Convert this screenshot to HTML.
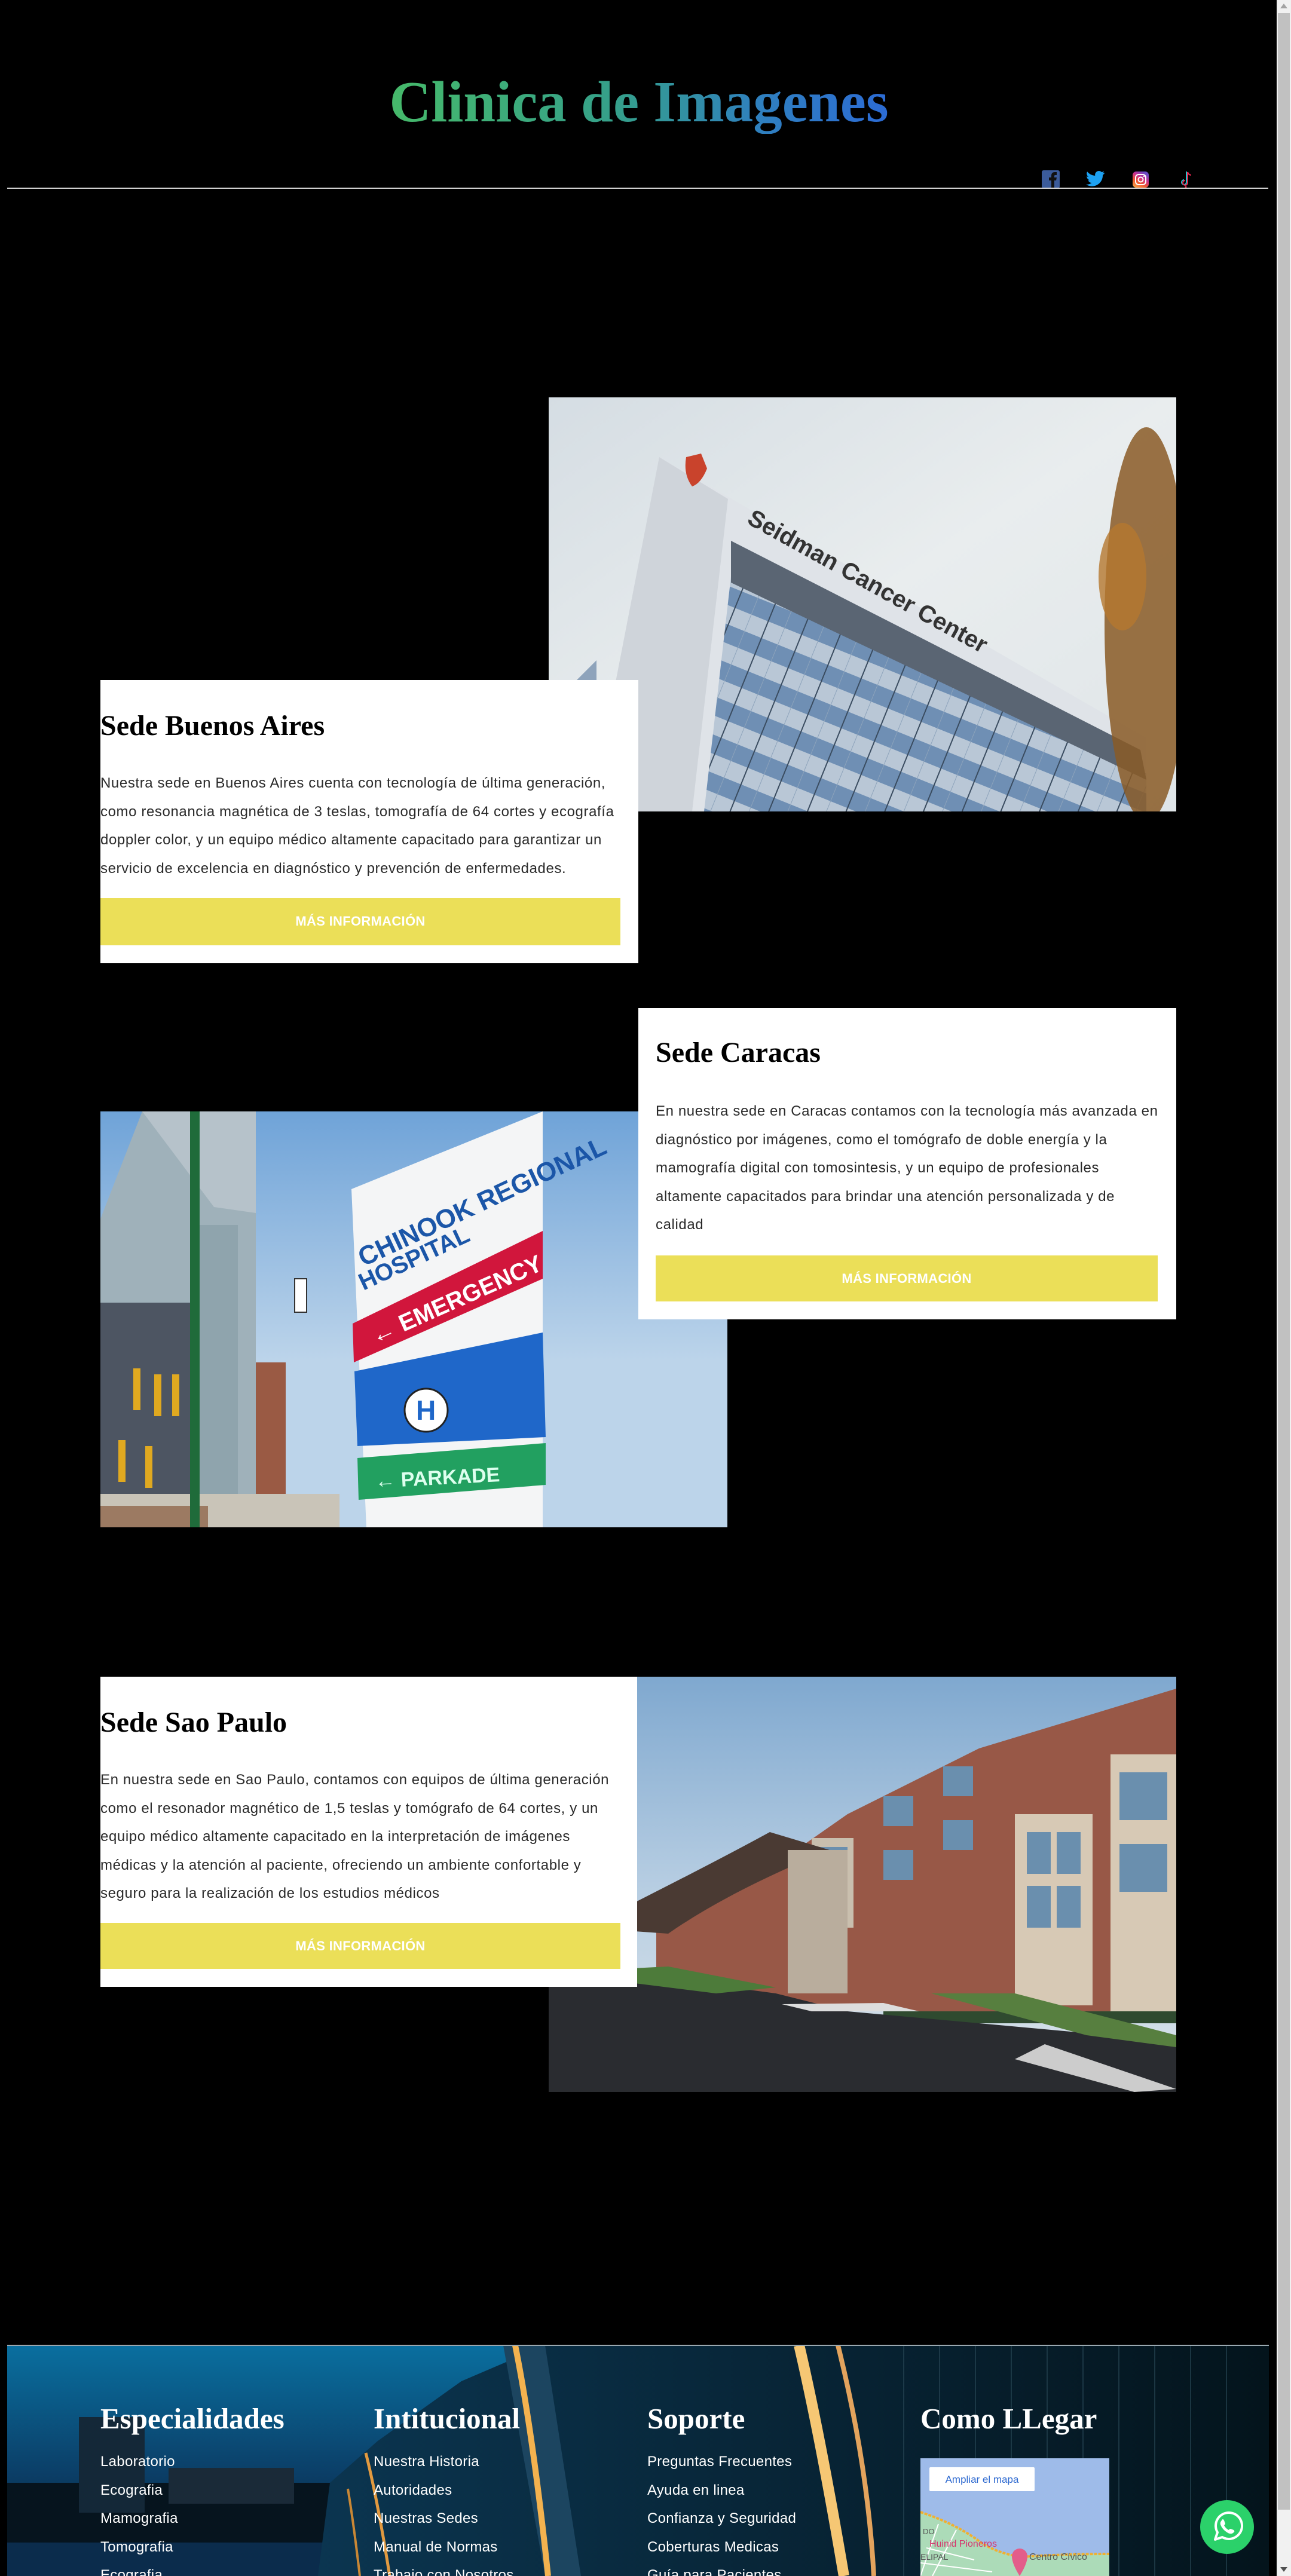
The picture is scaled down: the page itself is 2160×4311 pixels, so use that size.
<!DOCTYPE html>
<html><head><meta charset="utf-8">
<style>
*{margin:0;padding:0;box-sizing:border-box}
html,body{width:2160px;height:4311px;overflow:hidden;background:#000}
body{position:relative;font-family:"Liberation Sans",sans-serif}
.abs{position:absolute}
.title{left:0;width:2138px;top:106px;text-align:center;font-family:"Liberation Serif",serif;font-size:97px;line-height:130px;font-weight:bold}
.title span{background:linear-gradient(90deg,#46b96a 0%,#35a08a 45%,#2f7fc0 75%,#2c6bd4 100%);-webkit-background-clip:text;background-clip:text;color:transparent}
.hline{left:12px;width:2110px;top:314px;height:2px;background:#cfcfcf}
.card{background:#fff}
h2{position:absolute;font-family:"Liberation Serif",serif;font-weight:bold;font-size:48px;line-height:60px;color:#000;white-space:nowrap}
p.t{position:absolute;font-size:24px;line-height:47.5px;color:#2a2a2a;white-space:nowrap;letter-spacing:0.6px}
.btn{position:absolute;background:#ebdf58;color:#fff;font-weight:bold;font-size:22px;text-align:center;line-height:78px;letter-spacing:0.3px}
.fh{position:absolute;top:4018px;font-family:"Liberation Serif",serif;font-weight:bold;font-size:49px;line-height:60px;color:#fff;white-space:nowrap}
.fl{position:absolute;color:#fff;font-size:24px;line-height:47.5px;top:4096px;white-space:nowrap;letter-spacing:0.3px}
</style></head><body>

<div class="abs title"><span>Clinica de Imagenes</span></div>

<svg class="abs" style="left:1743px;top:285px" width="30" height="30" viewBox="0 0 30 30"><rect width="30" height="30" rx="3" fill="#3b5b9a"/><path d="M16 30V17h-4v-5h4V9c0-4 2-6 6-6h3v5h-2c-2 0-2 1-2 2v2h4l-1 5h-3v13z" fill="#111"/></svg>
<svg class="abs" style="left:1817px;top:286px" width="32" height="27" viewBox="0 0 32 27"><path d="M31 3c-1 .6-2.4 1-3.6 1.1 1.3-.8 2.300-2 2.800-3.500-1.200.7-2.600 1.200-4 1.500A6.400 6.400 0 0 0 15.300 8C10 7.800 5.300 5.200 2.100 1.300.4 4.200 1.300 8 4.100 9.800c-1 0-2-.3-2.900-.8 0 3.100 2.200 5.800 5.200 6.400-1 .3-2 .3-2.900.1.8 2.600 3.200 4.400 6 4.500A13 13 0 0 1 0 22.600 18 18 0 0 0 28 7c1.200-.9 2.300-2 3-3.100z" fill="#1da1f2"/></svg>
<svg class="abs" style="left:1895px;top:287px" width="27" height="27" viewBox="0 0 27 27"><defs><linearGradient id="ig" x1="0" y1="1" x2="0.6" y2="0"><stop offset="0" stop-color="#fdb24c"/><stop offset=".4" stop-color="#f0582f"/><stop offset=".7" stop-color="#c92e8f"/><stop offset="1" stop-color="#6a4bc4"/></linearGradient></defs><rect width="27" height="27" rx="6" fill="url(#ig)"/><rect x="5" y="5" width="17" height="17" rx="5" fill="none" stroke="#fff" stroke-width="2"/><circle cx="13.5" cy="13.5" r="4" fill="none" stroke="#fff" stroke-width="2"/><circle cx="19" cy="8" r="1.2" fill="#fff"/></svg>
<svg class="abs" style="left:1972px;top:285px" width="24" height="30" viewBox="0 0 24 30"><path d="M13 2v18a4 4 0 1 1-4-4" fill="none" stroke="#25c2d0" stroke-width="2"/><path d="M15 3v18a4 4 0 1 1-4-4M15 3c1 3 3 5 6 5" fill="none" stroke="#e8284f" stroke-width="2"/><circle cx="12" cy="28" r="1.5" fill="#e8284f"/></svg>

<div class="abs hline"></div>

<!-- Section 1 image -->
<svg class="abs" style="left:918px;top:665px" width="1050" height="693" viewBox="0 0 1050 693" preserveAspectRatio="none">
<defs><linearGradient id="sky1" x1="0" y1="0" x2="1" y2="1"><stop offset="0" stop-color="#d5dde3"/><stop offset=".5" stop-color="#e9edee"/><stop offset="1" stop-color="#dfe5e8"/></linearGradient>
<pattern id="wp" width="60" height="60" patternUnits="userSpaceOnUse" patternTransform="rotate(22)"><rect width="60" height="60" fill="#6f8fb4"/><rect x="0" y="30" width="60" height="30" fill="#b9c7d6"/><rect x="0" y="0" width="2" height="60" fill="#3a4c60"/><rect x="30" y="0" width="1" height="60" fill="#8da3bb"/></pattern></defs>
<rect width="1050" height="693" fill="url(#sky1)"/>
<polygon points="0,693 0,520 80,440 80,693" fill="#8ea3bb"/>
<polygon points="185,100 1000,570 1000,693 70,693" fill="#dfe3e8"/>
<polygon points="185,100 300,170 240,693 70,693" fill="#cfd4da"/>
<polygon points="305,300 1000,630 1000,693 260,693" fill="url(#wp)"/>
<polygon points="305,240 990,590 1000,640 305,310" fill="#5a6573"/>
<text x="330" y="210" font-family="Liberation Sans" font-weight="bold" font-size="40" fill="#333" transform="rotate(29 330 210)">Seidman Cancer Center</text>
<path d="M230 100 l25 -6 l10 25 q-10 25 -25 30 q-15 -20 -10 -49z" fill="#c9432c"/>
<ellipse cx="1000" cy="380" rx="70" ry="330" fill="#8a5a26" opacity=".85"/>
<ellipse cx="960" cy="300" rx="40" ry="90" fill="#b5782f" opacity=".8"/>
</svg>

<div class="abs card" style="left:168px;top:1138px;width:900px;height:474px"></div>
<h2 style="left:168px;top:1185px">Sede Buenos Aires</h2>
<p class="t" style="left:168px;top:1287px">Nuestra sede en Buenos Aires cuenta con tecnología de última generación,<br>como resonancia magnética de 3 teslas, tomografía de 64 cortes y ecografía<br>doppler color, y un equipo médico altamente capacitado para garantizar un<br>servicio de excelencia en diagnóstico y prevención de enfermedades.</p>
<div class="btn" style="left:168px;top:1503px;width:870px;height:79px">MÁS INFORMACIÓN</div>

<!-- Section 2 image -->
<svg class="abs" style="left:168px;top:1860px" width="1049" height="696" viewBox="0 0 1049 696" preserveAspectRatio="none">
<defs><linearGradient id="sky2" x1="0" y1="0" x2="0" y2="1"><stop offset="0" stop-color="#6fa3d8"/><stop offset=".6" stop-color="#bcd4ea"/></linearGradient></defs>
<rect width="1049" height="696" fill="url(#sky2)"/>
<polygon points="0,180 70,0 260,0 260,696 0,696" fill="#9fb1ba"/>
<polygon points="70,0 260,0 260,170 190,160" fill="#b6c2ca"/>
<rect x="0" y="320" width="200" height="330" fill="#4d5562"/>
<rect x="150" y="190" width="80" height="470" fill="#8fa4ad"/>
<rect x="55" y="430" width="12" height="70" fill="#e0a920"/><rect x="90" y="440" width="12" height="70" fill="#e0a920"/><rect x="120" y="440" width="12" height="70" fill="#e0a920"/>
<rect x="30" y="550" width="12" height="70" fill="#e0a920"/><rect x="75" y="560" width="12" height="70" fill="#e0a920"/>
<rect x="260" y="420" width="50" height="240" fill="#9a5a44"/>
<rect x="0" y="640" width="400" height="56" fill="#c9c4b8"/>
<rect x="0" y="660" width="180" height="36" fill="#9c7a62"/>
<rect x="150" y="0" width="16" height="696" fill="#1f6b3a"/>
<rect x="325" y="280" width="20" height="56" fill="#fff" stroke="#333" stroke-width="2"/>
<polygon points="420,130 740,0 740,696 445,696" fill="#f4f5f6"/>
<text x="440" y="260" font-family="Liberation Sans" font-weight="bold" font-size="44" fill="#1b56a8" transform="rotate(-25 440 260)">CHINOOK REGIONAL</text>
<text x="440" y="300" font-family="Liberation Sans" font-weight="bold" font-size="40" fill="#1b56a8" transform="rotate(-25 440 300)">HOSPITAL</text>
<polygon points="422,355 740,200 740,280 424,420" fill="#d1163c"/>
<text x="460" y="390" font-family="Liberation Sans" font-weight="bold" font-size="40" fill="#fff" transform="rotate(-24 460 390)">← EMERGENCY</text>
<polygon points="425,435 740,370 745,545 430,560" fill="#1f67c9"/>
<circle cx="545" cy="500" r="36" fill="#fff" stroke="#222" stroke-width="3"/>
<text x="528" y="516" font-family="Liberation Sans" font-weight="bold" font-size="46" fill="#1f67c9">H</text>
<polygon points="430,580 745,555 745,625 432,650" fill="#22a060"/>
<text x="460" y="630" font-family="Liberation Sans" font-weight="bold" font-size="34" fill="#dfe" transform="rotate(-3 460 630)">← PARKADE</text>
</svg>

<div class="abs card" style="left:1068px;top:1687px;width:900px;height:521px"></div>
<h2 style="left:1097px;top:1732px">Sede Caracas</h2>
<p class="t" style="left:1097px;top:1836px">En nuestra sede en Caracas contamos con la tecnología más avanzada en<br>diagnóstico por imágenes, como el tomógrafo de doble energía y la<br>mamografía digital con tomosintesis, y un equipo de profesionales<br>altamente capacitados para brindar una atención personalizada y de<br>calidad</p>
<div class="btn" style="left:1097px;top:2101px;width:840px;height:77px">MÁS INFORMACIÓN</div>

<!-- Section 3 image -->
<svg class="abs" style="left:918px;top:2806px" width="1050" height="695" viewBox="0 0 1050 695" preserveAspectRatio="none">
<defs><linearGradient id="sky3" x1="0" y1="0" x2="0" y2="1"><stop offset="0" stop-color="#7fa8cf"/><stop offset=".5" stop-color="#b6cde2"/><stop offset="1" stop-color="#dde5ea"/></linearGradient></defs>
<rect width="1050" height="695" fill="url(#sky3)"/>
<polygon points="180,420 300,360 400,300 500,230 720,120 1050,20 1050,560 180,560" fill="#985847"/>
<rect x="780" y="230" width="130" height="320" fill="#d7c9b5"/>
<rect x="800" y="260" width="40" height="70" fill="#6a8fae"/><rect x="850" y="260" width="40" height="70" fill="#6a8fae"/>
<rect x="800" y="350" width="40" height="70" fill="#6a8fae"/><rect x="850" y="350" width="40" height="70" fill="#6a8fae"/>
<rect x="940" y="130" width="110" height="440" fill="#d7c9b5"/>
<rect x="955" y="160" width="80" height="80" fill="#6a8fae"/><rect x="955" y="280" width="80" height="80" fill="#6a8fae"/>
<rect x="440" y="270" width="70" height="150" fill="#c9bfae"/>
<rect x="450" y="285" width="50" height="120" fill="#6a8fae"/>
<rect x="560" y="200" width="50" height="50" fill="#6a8fae"/><rect x="560" y="290" width="50" height="50" fill="#6a8fae"/>
<rect x="660" y="150" width="50" height="50" fill="#6a8fae"/><rect x="660" y="240" width="50" height="50" fill="#6a8fae"/>
<path d="M60 420 Q260 320 370 260 L470 290 Q300 360 200 430 Z" fill="#4a3a33"/>
<rect x="400" y="290" width="100" height="240" fill="#b9ad9d"/>
<rect x="560" y="560" width="490" height="20" fill="#2f4a2f"/>
<polygon points="0,495 230,510 380,530 500,560 1050,610 1050,695 0,695" fill="#2a2c30"/>
<polygon points="0,495 200,485 380,520 280,530" fill="#4d7b3a"/>
<polygon points="640,530 900,600 1050,620 1050,600 780,530" fill="#577f3f"/>
<polygon points="390,548 560,546 620,560 440,560" fill="#ddd"/>
<polygon points="780,640 830,615 1050,690 980,695" fill="#ccc"/>
</svg>

<div class="abs card" style="left:168px;top:2806px;width:898px;height:519px"></div>
<h2 style="left:168px;top:2853px">Sede Sao Paulo</h2>
<p class="t" style="left:168px;top:2955px">En nuestra sede en Sao Paulo, contamos con equipos de última generación<br>como el resonador magnético de 1,5 teslas y tomógrafo de 64 cortes, y un<br>equipo médico altamente capacitado en la interpretación de imágenes<br>médicas y la atención al paciente, ofreciendo un ambiente confortable y<br>seguro para la realización de los estudios médicos</p>
<div class="btn" style="left:168px;top:3218px;width:870px;height:77px">MÁS INFORMACIÓN</div>

<!-- Footer -->
<svg class="abs" style="left:12px;top:3925px" width="2111" height="386" viewBox="0 0 2111 386" preserveAspectRatio="none">
<defs><linearGradient id="fsky" x1="0" y1="0" x2="0" y2="1"><stop offset="0" stop-color="#0a6f9f"/><stop offset=".55" stop-color="#0b3f68"/><stop offset="1" stop-color="#061a2a"/></linearGradient>
<linearGradient id="fr" x1="0" y1="0" x2="1" y2="0"><stop offset="0" stop-color="#0b3550"/><stop offset="1" stop-color="#04141c"/></linearGradient></defs>
<rect width="2111" height="386" fill="url(#fsky)"/>
<rect x="0" y="230" width="560" height="156" fill="#06141e"/>
<rect x="120" y="120" width="110" height="160" fill="#142838"/>
<rect x="270" y="205" width="210" height="60" fill="#1a2a38"/>
<rect x="0" y="330" width="560" height="56" fill="#0b2c4c"/>
<polygon points="520,386 540,230 620,160 760,60 900,0 2111,0 2111,386" fill="url(#fr)"/>
<polygon points="830,0 900,0 960,386 900,386" fill="#1c4560"/>
<path d="M850 0 Q880 150 905 386" stroke="#f3b24f" stroke-width="10" fill="none"/>
<path d="M1325 0 Q1360 150 1400 386" stroke="#f6c774" stroke-width="18" fill="none"/>
<path d="M1390 0 Q1440 200 1450 386" stroke="#e3a35d" stroke-width="8" fill="none"/>
<path d="M600 180 Q620 260 640 386" stroke="#e29a40" stroke-width="5" fill="none"/>
<path d="M570 240 Q580 300 590 386" stroke="#c98735" stroke-width="4" fill="none"/>
<g stroke="#2a4a58" stroke-width="2" opacity=".6">
<line x1="1500" y1="0" x2="1500" y2="386"/><line x1="1560" y1="0" x2="1560" y2="386"/><line x1="1620" y1="0" x2="1620" y2="386"/><line x1="1680" y1="0" x2="1680" y2="386"/><line x1="1740" y1="0" x2="1740" y2="386"/><line x1="1800" y1="0" x2="1800" y2="386"/><line x1="1860" y1="0" x2="1860" y2="386"/><line x1="1920" y1="0" x2="1920" y2="386"/><line x1="1980" y1="0" x2="1980" y2="386"/><line x1="2040" y1="0" x2="2040" y2="386"/>
</g>
</svg>
<div class="abs" style="left:12px;top:3924px;width:2111px;height:2px;background:#9aa8b0"></div>

<div class="fh" style="left:168px">Especialidades</div>
<div class="fh" style="left:625px">Intitucional</div>
<div class="fh" style="left:1083px">Soporte</div>
<div class="fh" style="left:1540px">Como LLegar</div>
<div class="fl" style="left:168px">Laboratorio<br>Ecografia<br>Mamografia<br>Tomografia<br>Ecografia</div>
<div class="fl" style="left:625px">Nuestra Historia<br>Autoridades<br>Nuestras Sedes<br>Manual de Normas<br>Trabajo con Nosotros</div>
<div class="fl" style="left:1083px">Preguntas Frecuentes<br>Ayuda en linea<br>Confianza y Seguridad<br>Coberturas Medicas<br>Guía para Pacientes</div>

<svg class="abs" style="left:1540px;top:4114px" width="316" height="197" viewBox="0 0 316 197">
<rect width="316" height="197" fill="#9ebbe9"/>
<path d="M0 90 Q60 110 100 140 Q130 160 170 165 Q240 160 316 160 L316 197 L0 197 Z" fill="#acdbb8"/>
<path d="M0 90 Q60 110 100 140 Q130 160 170 165 Q240 160 316 160" stroke="#f0b030" stroke-width="4" fill="none" stroke-dasharray="5 2"/>
<g stroke="#fff" stroke-width="2" fill="none"><path d="M30 110 L0 197M60 120 L20 197M10 150 L90 170M0 175 L120 190"/></g>
<text x="4" y="127" font-family="Liberation Sans" font-size="13" fill="#555">DO</text>
<text x="15" y="148" font-family="Liberation Sans" font-size="16" fill="#d6336c">Huinid Pioneros</text>
<text x="0" y="170" font-family="Liberation Sans" font-size="14" fill="#555">ELIPAL</text>
<text x="182" y="170" font-family="Liberation Sans" font-size="16" fill="#555">Centro Cívico</text>
<path d="M153 164 a13 13 0 1 1 26 0 q0 12 -13 33 q-13 -21 -13 -33z" fill="#e35d8a"/>
<rect x="15" y="15" width="176" height="40" rx="2" fill="#fff"/>
<text x="103" y="41" text-anchor="middle" font-family="Liberation Sans" font-size="17" fill="#2f6ad0">Ampliar el mapa</text>
</svg>

<svg class="abs" style="left:2008px;top:4184px" width="90" height="90" viewBox="0 0 90 90">
<circle cx="45" cy="45" r="45" fill="#2bd16a"/>
<path d="M25 66 l4-12 a22 22 0 1 1 8 8z" fill="none" stroke="#fff" stroke-width="4" stroke-linejoin="round"/>
<path d="M36 34 q2-4 4 0 l2 5 q0 2 -2 3 q3 6 8 8 q1-2 3-2 l5 2 q3 2 -1 5 q-4 3 -10 -1 q-8 -5 -11 -13 q-1 -4 2 -7z" fill="#fff"/>
</svg>

<div class="abs" style="left:2136px;top:0;width:24px;height:4311px;background:#f1f1f1"></div>
<div class="abs" style="left:2138px;top:22px;width:20px;height:4178px;background:#c1c1c1"></div>
<div class="abs" style="left:2142px;top:6px;width:0;height:0;border-left:6px solid transparent;border-right:6px solid transparent;border-bottom:8px solid #a3a3a3"></div>
<div class="abs" style="left:2142px;top:4296px;width:0;height:0;border-left:6px solid transparent;border-right:6px solid transparent;border-top:8px solid #505050"></div>
</body></html>
